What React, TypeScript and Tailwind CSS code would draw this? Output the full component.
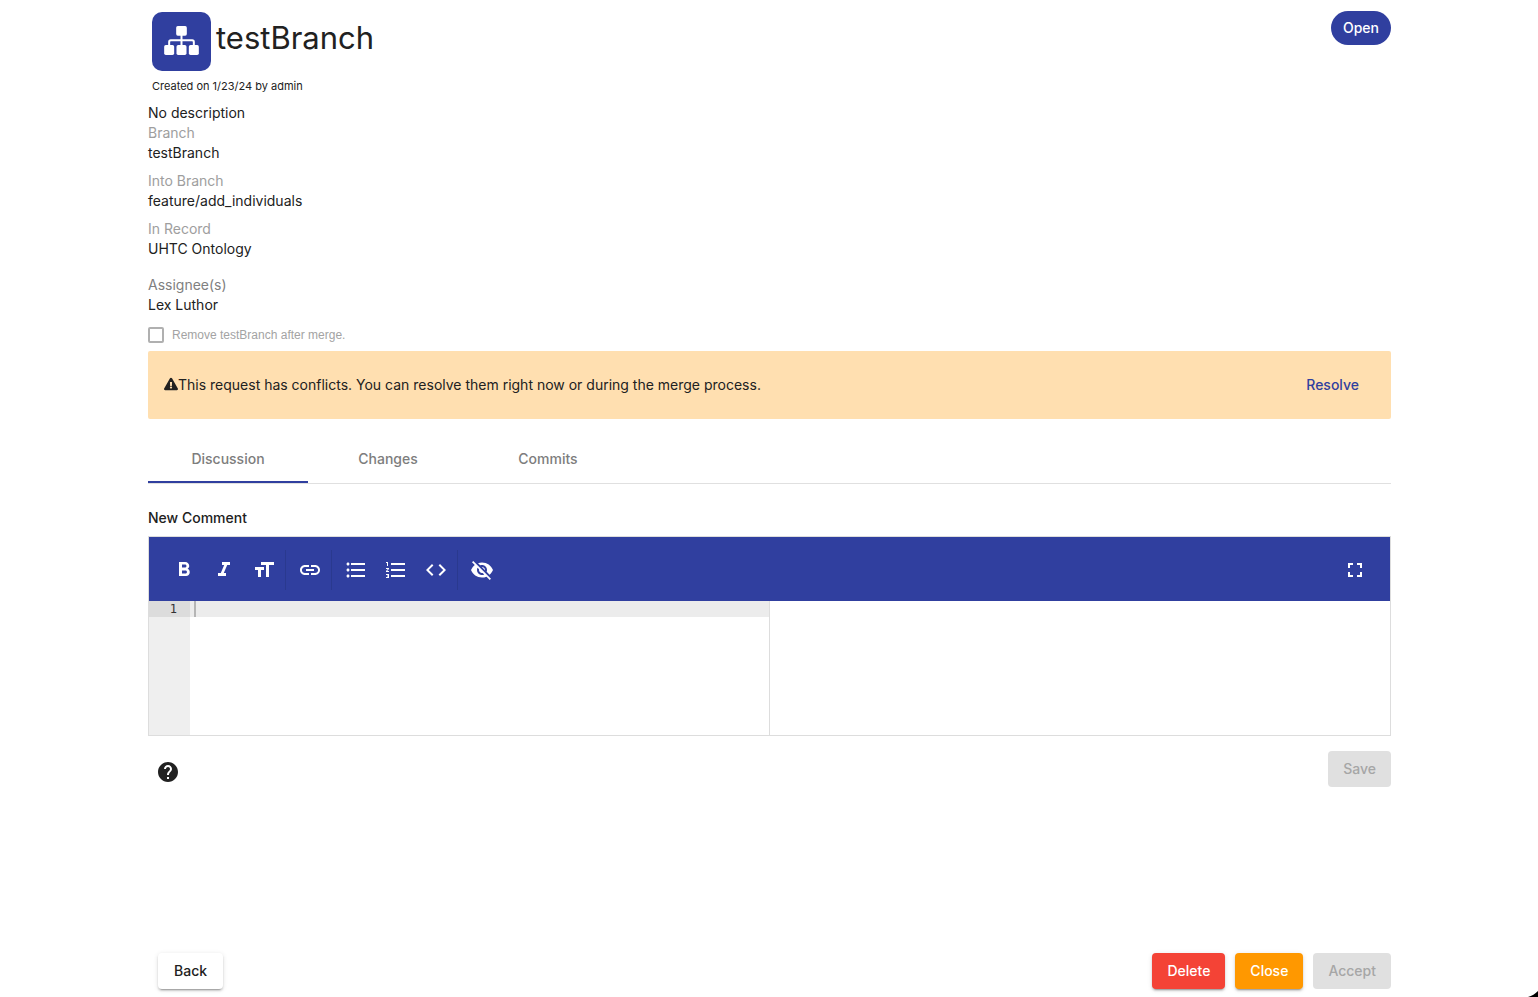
import { useState } from "react";
import type { ReactNode } from "react";
import { FaExclamationTriangle } from "react-icons/fa";
import {
  MdCode,
  MdFormatBold,
  MdFormatItalic,
  MdFormatListBulleted,
  MdFormatListNumbered,
  MdFormatSize,
  MdFullscreen,
  MdHelp,
  MdLink,
  MdVisibilityOff,
} from "react-icons/md";

function SitemapIcon() {
  return (
    <svg aria-hidden="true" viewBox="0 0 104 87" className="mb-0.5 h-[29px] w-[35px]" fill="currentColor">
      <rect x="36" y="0" width="32" height="29" rx="5" />
      <rect x="0" y="57" width="30" height="30" rx="5" />
      <rect x="37" y="57" width="30" height="30" rx="5" />
      <rect x="74" y="57" width="30" height="30" rx="5" />
      <path d="M15 59V48Q15 43 20 43H84Q89 43 89 48V59M52 27V59" fill="none" stroke="currentColor" strokeWidth="6" />
    </svg>
  );
}

function Field({ label, value, labelClass }: { label: string; value: string; labelClass: string }) {
  return (
    <div>
      <dt className={labelClass}>{label}</dt>
      <dd>{value}</dd>
    </div>
  );
}

function ToolButton({ label, children }: { label: string; children: ReactNode }) {
  return (
    <button type="button" aria-label={label} className="flex size-10 items-center justify-center text-2xl text-white">
      {children}
    </button>
  );
}

function Separator() {
  return <div className="mr-1 ml-px h-10 w-px bg-[#2a398f]" />;
}

const tabs = ["Discussion", "Changes", "Commits"];

export default function App() {
  const [active, setActive] = useState("Discussion");
  const [comment, setComment] = useState("");

  return (
    <div className="relative flex min-h-screen flex-col bg-white pr-[147px] pl-[148px] font-['Inter','Liberation_Sans',sans-serif] text-sm leading-5 text-[#212121]">
      <header className="flex items-start justify-between pt-3">
        <div className="flex items-center gap-[5px] pl-1">
          <div className="flex size-[59px] items-center justify-center rounded-[10px] bg-[#303f9f] text-white">
            <SitemapIcon />
          </div>
          <h1 className="pb-2 text-[31px] leading-10">testBranch</h1>
        </div>
        <button type="button" className="-mt-px h-[34px] rounded-full bg-[#303f9f] px-3 font-medium text-white">
          Open
        </button>
      </header>

      <p className="pt-[5px] pl-1 text-[11px] leading-5">Created on 1/23/24 by admin</p>

      <p className="pt-[7px]">No description</p>
      <dl className="flex flex-col gap-2">
        <Field label="Branch" value="testBranch" labelClass="text-[#9e9e9e]" />
        <Field label="Into Branch" value="feature/add_individuals" labelClass="text-[#9e9e9e]" />
        <Field label="In Record" value="UHTC Ontology" labelClass="text-[#9e9e9e]" />
        <div className="pt-2">
          <Field label="Assignee(s)" value="Lex Luthor" labelClass="text-[#808080]" />
        </div>
      </dl>

      <label className="flex items-center gap-2 pt-[10px] pb-1.5 font-['Liberation_Sans',sans-serif] text-xs leading-5 text-[#a3a3a3]">
        <input type="checkbox" disabled className="size-4 appearance-none rounded-xs border-2 border-[#b0b0b0] bg-white" />
        Remove testBranch after merge.
      </label>

      <section className="flex h-[68px] items-center justify-between rounded-xs bg-[#ffdfb0] px-4">
        <p className="flex items-center">
          <FaExclamationTriangle className="mb-0.5 size-[14px]" />
          This request has conflicts. You can resolve them right now or during the merge process.
        </p>
        <button type="button" className="h-9 px-4 font-medium text-[#303f9f]">
          Resolve
        </button>
      </section>

      <div role="tablist" className="mt-4 flex border-b border-[#e0e0e0]">
        {tabs.map((tab) => (
          <button
            key={tab}
            type="button"
            role="tab"
            aria-selected={tab === active}
            onClick={() => setActive(tab)}
            className={
              tab === active
                ? "h-12 w-40 border-b-2 border-[#303f9f] pt-0.5 font-medium text-[#7d7d7d]"
                : "h-12 w-40 border-b-2 border-transparent pt-0.5 font-medium text-[#7d7d7d]"
            }
          >
            {tab}
          </button>
        ))}
      </div>

      <label htmlFor="comment" className="mt-6 pb-2 font-medium">
        New Comment
      </label>

      <div className="border border-[#dddddd]">
        <div className="flex h-16 items-center bg-[#303f9f] px-[15px] pt-0.5">
          <ToolButton label="Bold"><MdFormatBold /></ToolButton>
          <ToolButton label="Italic"><MdFormatItalic /></ToolButton>
          <ToolButton label="Heading"><MdFormatSize /></ToolButton>
          <Separator />
          <ToolButton label="Link"><MdLink /></ToolButton>
          <Separator />
          <ToolButton label="Bulleted list"><MdFormatListBulleted /></ToolButton>
          <ToolButton label="Numbered list"><MdFormatListNumbered /></ToolButton>
          <ToolButton label="Code"><MdCode /></ToolButton>
          <Separator />
          <ToolButton label="Toggle preview"><MdVisibilityOff /></ToolButton>
          <div className="ml-auto">
            <ToolButton label="Full screen"><MdFullscreen /></ToolButton>
          </div>
        </div>
        <div className="grid h-[134px] grid-cols-2 font-['DejaVu_Sans_Mono',monospace] text-xs leading-4">
          <div className="flex border-r border-[#dddddd]">
            <div className="w-[41px] bg-[#efefef] text-[#333333]">
              <div className="bg-[#dcdcdc] pr-[13px] text-right">1</div>
            </div>
            <div className="relative flex-1">
              <textarea
                id="comment"
                value={comment}
                onChange={(event) => setComment(event.target.value)}
                className="block size-full resize-none bg-[linear-gradient(#ececec_16px,#ffffff_16px)] px-1 outline-none"
              />
              <div className="absolute top-0 left-1 h-4 w-0.5 bg-[#b5b5b5]" />
            </div>
          </div>
          <div />
        </div>
      </div>

      <div className="flex items-start justify-between pt-[15px]">
        <button type="button" aria-label="Help" className="mt-[9px] ml-2 text-2xl">
          <MdHelp />
        </button>
        <button type="button" disabled className="h-9 rounded-sm bg-[#e0e0e0] px-[15px] font-medium text-[#a6a6a6]">
          Save
        </button>
      </div>

      <footer className="mt-auto flex items-center justify-between pb-2">
        <button
          type="button"
          className="ml-2.5 h-9 rounded-sm bg-white px-4 font-medium shadow-[0_3px_1px_-2px_rgba(0,0,0,0.2),0_2px_2px_0_rgba(0,0,0,0.14),0_1px_5px_0_rgba(0,0,0,0.12)]"
        >
          Back
        </button>
        <div className="flex gap-2.5">
          <button
            type="button"
            className="h-9 rounded-sm bg-[#f44336] px-[15px] font-medium text-white shadow-[0_3px_1px_-2px_rgba(0,0,0,0.2),0_2px_2px_0_rgba(0,0,0,0.14),0_1px_5px_0_rgba(0,0,0,0.12)]"
          >
            Delete
          </button>
          <button
            type="button"
            className="h-9 rounded-sm bg-[#ff9800] px-[15px] font-medium text-white shadow-[0_3px_1px_-2px_rgba(0,0,0,0.2),0_2px_2px_0_rgba(0,0,0,0.14),0_1px_5px_0_rgba(0,0,0,0.12)]"
          >
            Close
          </button>
          <button type="button" disabled className="h-9 rounded-sm bg-[#e0e0e0] px-[15px] font-medium text-[#a6a6a6]">
            Accept
          </button>
        </div>
      </footer>

      <svg aria-hidden="true" viewBox="0 0 10 6" className="absolute right-0 bottom-0 h-1.5 w-2.5">
        <path d="M0 6C4 5 7 3 10 0V6Z" fill="#000000" />
      </svg>
    </div>
  );
}
